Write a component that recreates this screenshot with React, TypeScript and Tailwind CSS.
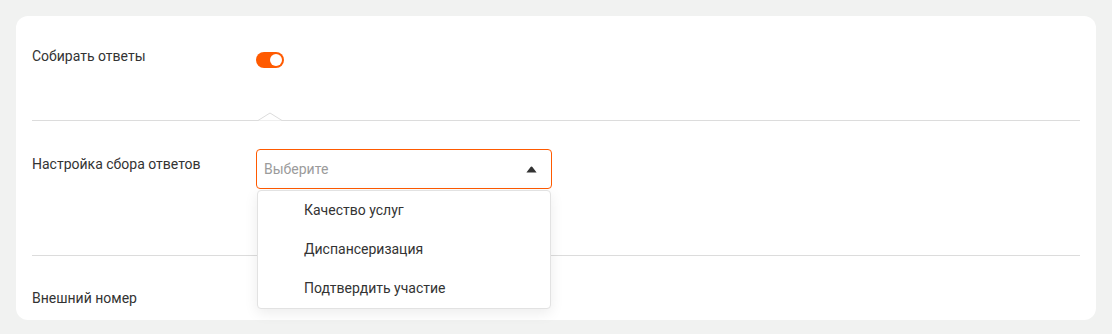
import { useState } from 'react';

const OPTIONS = ['Качество услуг', 'Диспансеризация', 'Подтвердить участие'];

function Toggle({ on }: { on: boolean }) {
  return (
    <div
      className={`mt-1.5 flex h-4 w-7 items-center rounded-full px-[2px] ${
        on ? 'justify-end bg-[#ff5a00]' : 'justify-start bg-[#cfd2d4]'
      }`}
    >
      <span className="h-3 w-3 rounded-full bg-white" />
    </div>
  );
}

function Divider({ notch }: { notch?: boolean }) {
  return (
    <div className="relative h-px bg-[#dcdcdc]">
      {notch && (
        <svg
          className="absolute -top-[8px] left-[226px]"
          width="24"
          height="9"
          viewBox="0 0 24 9"
          fill="none"
        >
          <path d="M0 8.5 L12 1 L24 8.5" fill="#ffffff" stroke="#dcdcdc" strokeWidth="1" />
        </svg>
      )}
    </div>
  );
}

export default function App() {
  const [enabled] = useState(true);
  const [open] = useState(true);

  return (
    <div
      className="min-h-screen bg-[#f1f2f1] p-4 text-[14px] text-[#333333]"
      style={{ fontFamily: 'Roboto, "Liberation Sans", sans-serif' }}
    >
      <div className="h-[304px] w-[1080px] rounded-xl bg-white px-4 pt-[30px]">
        <div className="flex h-[74px]">
          <div className="w-[224px] leading-5">Собирать ответы</div>
          <Toggle on={enabled} />
        </div>

        <Divider notch />

        <div className="flex h-[134px] pt-[28px]">
          <div className="mt-[5px] w-[224px] leading-5">Настройка сбора ответов</div>
          <div className="relative z-10 w-[296px]">
            <div className="flex h-10 items-center justify-between rounded border border-[#ff5a00] bg-white pl-[7px] pr-[14px]">
              <span className="text-[#9b9b9b]">Выберите</span>
              <svg width="11" height="7" viewBox="0 0 11 7">
                <path d="M5.5 0.5 C6 0.5 6.3 0.8 6.6 1.2 L10.6 6.5 L0.4 6.5 L4.4 1.2 C4.7 0.8 5 0.5 5.5 0.5 Z" fill="#333333" />
              </svg>
            </div>
            {open && (
              <ul className="absolute left-px right-px top-[41px] rounded border border-[#e2e2e2] bg-white shadow-[0_4px_14px_rgba(0,0,0,0.08)]">
                {OPTIONS.map((option) => (
                  <li key={option} className="flex h-[39px] items-center pb-px pl-[46px]">
                    {option}
                  </li>
                ))}
              </ul>
            )}
          </div>
        </div>

        <Divider />

        <div className="pt-[32px] leading-5">Внешний номер</div>
      </div>
    </div>
  );
}
